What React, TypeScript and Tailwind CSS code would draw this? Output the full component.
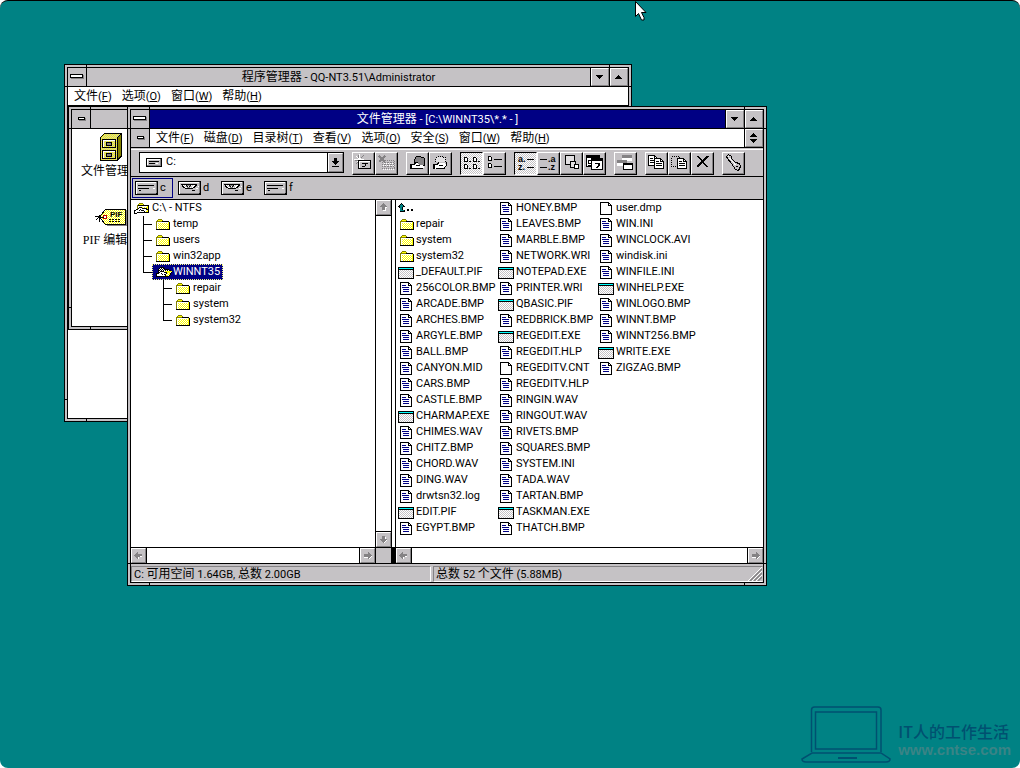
import React, { useState } from "react";

const PALETTE: Record<string, string> = {
  k: "#000000",
  w: "#ffffff",
  y: "#ffff00",
  o: "#848200",
  g: "#848284",
  l: "#c5c2c5",
  n: "#000084",
  c: "#00ffff",
  t: "#008284",
};

// Small bitmap icons, one letter per pixel
const Bitmap: React.FC<{ rows: string[]; className?: string }> = ({ rows, className }) => (
  <svg
    width={Math.max(...rows.map((row) => row.length))}
    height={rows.length}
    shapeRendering="crispEdges"
    className={`shrink-0 ${className ?? ""}`}
    aria-hidden="true"
  >
    {rows.map((row, y) =>
      row
        .split("")
        .map((p, x) =>
          PALETTE[p] ? <rect key={`${x}-${y}`} x={x} y={y} width={1} height={1} fill={PALETTE[p]} /> : null
        )
    )}
  </svg>
);

const FOLDER = [
  "..............",
  "..oooo........",
  ".oyyyyo.......",
  "ooooookkkkkkk.",
  "owwwwwwwwwwwyk",
  "owywywywywywyk",
  "owwywywywywyyk",
  "owywywywywywyk",
  "owwywywywywyyk",
  "owywywywywywyk",
  "owwywywywywyyk",
  "kkkkkkkkkkkkkk",
];

const LIST_FOLDER = FOLDER.map((row) => ".." + row);

const FOLDER_OPEN = [
  "................",
  ".....oooo.......",
  "....oyyyyo......",
  "...okkkkkkkkkkk.",
  "...owwwwwwwwwyk.",
  "...owkkkywywyyk.",
  "...okwwwkkkkkyk.",
  "..kkwwkwwwwwkkk.",
  "kkwwwkwkkkwwwyk.",
  "kwwwwwwwwwkwyyk.",
  "kwwkkkkkkkkkkkk.",
  "kkk.............",
];

const FOLDER_CURRENT = [
  "................",
  "....kkkk........",
  "...kwkwkk.......",
  "..kwkwkwkkkkk...",
  "..kkwkwkwkwkwkk.",
  "..kwkkkkwyyyyyyy",
  "..kkwwwwkkkyyywk",
  "kkkwwkwwwwkywyk.",
  "kwwwwwkwkkwwyyk.",
  "kwwwwwwwwkyywk..",
  "kkkkkkkkkkkkk...",
  "................",
];

const DOC = [
  "............",
  "kkkkkkkkk...",
  "kwwwwwwwkk..",
  "kwwwwwwwkwk.",
  "kwnnnnwwkkkk",
  "kwwwwwwwwwwk",
  "kwnnnnnnnwwk",
  "kwwwwwwwwwwk",
  "kwwnnnnnnwwk",
  "kwwwwwwwwwwk",
  "kwwnnnnnnwwk",
  "kwwwwwwwwwwk",
  "kwwwwwwwwwwk",
  "kkkkkkkkkkkk",
];

const BLANK = DOC.map((row) => row.replace(/n/g, "w"));

const PROGRAM = [
  "................",
  "................",
  "kkkkkkkkkkkkkkkk",
  "kcccccccccccccck",
  "kkkkkkkkkkkkkkkk",
  "kwlwlwlwlwlwlwlk",
  "klwlwlwlwlwlwlwk",
  "kwlwlwlwlwlwlwlk",
  "klwlwlwlwlwlwlwk",
  "kwlwlwlwlwlwlwlk",
  "klwlwlwlwlwlwlwk",
  "kwlwlwlwlwlwlwlk",
  "klwlwlwlwlwlwlwk",
  "kkkkkkkkkkkkkkkk",
];

const UP_DIR = [
  "...k............",
  "..ktk...........",
  ".ktttk..........",
  "kktttkk.........",
  ".kttk...........",
  "..ttk...........",
  "..ttk....kk..kk.",
  "..ttttk..kk..kk.",
  "..kkkkk.........",
  "................",
];

const HARD_DRIVE = [
  "kkkkkkkkkkkkkkkkkkkkkkk",
  "kwwwwwwwwwwwwwwwwwwwwgk",
  "kwlllllllllllllllllllgk",
  "kwlllllllllllllllllllgk",
  "kwlkkkkkkkkkkkkkkkkllgk",
  "kwlllllllllllllllllllgk",
  "kwlllllllllllllllllllgk",
  "kwlkkkkkkkkkkkllllwwlgk",
  "kwlllllllllllllllllllgk",
  "kwllkklllllllllllllllgk",
  "kwlllllllllllllllllllgk",
  "kwlllllllllllllllllllgk",
  "kwgggggggggggggggggggkk",
  "kkkkkkkkkkkkkkkkkkkkkkk",
];

const CD_DRIVE = [
  "kkkkkkkkkkkkkkkkkkkkkkk",
  "kwwwwwwwwwwwwwwwwwwwwgk",
  "kwlllllllllllllllllllgk",
  "kwlkkkkkkkkkkkkkkkkllgk",
  "kwllkwlwkgggkwlwwkkllgk",
  "kwllkkwlgkwkglwwkkllwgk",
  "kwlllkkwwgggwlwkkllllgk",
  "kwlllllkkkkkkkklllwwlgk",
  "kwlllllllllllllllllllgk",
  "kwllllllllllllkkkllllgk",
  "kwlllllllllllllllllllgk",
  "kwlllllllllllllllllllgk",
  "kwgggggggggggggggggggkk",
  "kkkkkkkkkkkkkkkkkkkkkkk",
];

const COMBO_DRIVE = [
  "kkkkkkkkkkkkkkkk",
  "kwwwwwwwwwwwwwgk",
  "kwllllllllllllgk",
  "kwlkkkkkkkkkklgk",
  "kwllllllllllllgk",
  "kwlkkkkkklwwllgk",
  "kwllllllllllllgk",
  "kggggggggggggggk",
  "kkkkkkkkkkkkkkkk",
];

const ARROW_DOWN = ["kkkkkkk.", ".kkkkk..", "..kkk...", "...k...."];
const ARROW_UP = ["...k....", "..kkk...", ".kkkkk..", "kkkkkkk."];
const RESTORE = [...ARROW_UP, "........", "........", ...ARROW_DOWN];
const COMBO_ARROW = ["..kkk..", "..kkk..", "..kkk..", "kkkkkkk", ".kkkkk.", "..kkk..", "...k...", ".......", "kkkkkkk"];
const SCROLL_LEFT = ["...g.....", "..gg.....", ".ggggggg.", "gggggggg.", ".gggggww.", "..ggw....", "...gw...."];
const SCROLL_RIGHT = [".....g...", ".....gg..", ".ggggggg.", ".gggggggg", ".gggggggw", ".wwwwggw.", ".....gw.."];
const SCROLL_UP = ["...g...", "..ggg..", ".ggggg.", "ggggggg", "..gggww", "..gggw.", "..gggw.", "...www.", "......."];
const SCROLL_DOWN = ["..ggg..", "..gggw.", "..gggw.", "ggggggg", ".gggggw", "..gggw.", "...gw.."];
const SYSTEM_BAR = ["kkkkkkkkkkkkk.", "kwwwwwwwwwwwkg", "kwwwwwwwwwwwkg", "kkkkkkkkkkkkkg", ".ggggggggggggg", ".............."];
const CHILD_BAR = ["..kkkkkkk.", "..kwwwwwkg", "..kkkkkkkg", "...ggggggg"];

const raised = "border border-t-white border-l-white border-r-[#848284] border-b-[#848284] bg-[#c5c2c5]";

// Latin runs are set one size smaller than the Chinese around them
const Mixed: React.FC<{ text: string }> = ({ text }) => (
  <>
    {text.split(/([\x20-\x7e]+)/).map((part, i) =>
      i % 2 ? (
        <span key={i} className="text-[11px] whitespace-pre">
          {part}
        </span>
      ) : (
        part
      )
    )}
  </>
);

type ToolIcon = { label: string; icon: React.ReactNode; pressed?: boolean };

const page = (x: number, y: number) => (
  <g>
    <path d={`M${x}.5 ${y}.5h6l3 3v7h-9z`} fill="#fff" stroke="#000" />
    <path d={`M${x + 6}.5 ${y}.5v3h3M${x + 2} ${y + 3}.5h3M${x + 2} ${y + 5}.5h6M${x + 2} ${y + 7}.5h6`} fill="none" stroke="#000" />
  </g>
);

const miniPage = (x: number, y: number) => (
  <path d={`M${x}.5 ${y}.5h2l1 1v3h-3z`} fill="#fff" stroke="#000" />
);

const sortText = "font-['Liberation_Sans'] text-[9px] font-bold";

const toolGroups: ToolIcon[][] = [
  [
    {
      label: "连接网络驱动器",
      icon: (
        <>
          <path d="M7.5 2v9M2 7.5h10M4 4l6 6M11 4l-6 6" stroke="#fff" />
          <path d="M6.5 3v3M3 8.5h3M9 6l3-3M4 12l2-2" stroke="#848284" />
          <rect x="6.5" y="8.5" width="12" height="8" fill="#c5c2c5" stroke="#000" />
          <path d="M7 9.5h11M7.5 10v6" stroke="#fff" />
          <path d="M10 11.5h6M13.5 12v2M10 14.5h3" stroke="#000" fill="none" />
        </>
      ),
    },
    {
      label: "断开网络驱动器",
      icon: (
        <>
          <rect x="7.5" y="8.5" width="12" height="8" fill="none" stroke="#848284" strokeDasharray="1 1" />
          <path d="M9 10.5h10M9 12.5h10M9 14.5h10" stroke="#848284" strokeDasharray="2 1" />
          <path d="M9 11.5h10M8 13.5h11M8 17.5h12" stroke="#fff" strokeDasharray="1 1" />
          <path d="M4 4l6 6M10 4l-6 6" stroke="#848284" strokeWidth="2" />
        </>
      ),
    },
  ],
  [
    {
      label: "共享目录",
      icon: (
        <>
          <path d="M8.5 12.5v-5l2-3h4l1 1h2l1 1v7h-5z" fill="#848284" stroke="#000" />
          <path d="M6 13h2l2-2h2l1 2h4l1 2-1 1h-7l-4 1z" fill="#fff" />
          <path d="M6 12.5h2l2-2h2M6 16.5h11M10 13.5h4" fill="none" stroke="#000" />
          <path d="M4 12h2v5h-2z" fill="#000" />
        </>
      ),
    },
    {
      label: "停止共享",
      icon: (
        <>
          <path d="M6.5 9.5v-3l2-2h5l1 1h2v5" fill="#e2e0e2" stroke="#000" strokeDasharray="1 1" />
          <path d="M6 13h2l2-2h6l1 2-2 3h-6l-3 1z" fill="#fff" />
          <path d="M6 12.5h2l2-2M17.5 10v3l-2 3h-9M10 13.5h4" fill="none" stroke="#000" />
          <path d="M4 12h2v5h-2z" fill="#000" />
        </>
      ),
    },
  ],
  [
    {
      label: "名称",
      pressed: true,
      icon: (
        <>
          {miniPage(4, 5)}
          {miniPage(13, 5)}
          {miniPage(4, 12)}
          {miniPage(13, 12)}
          <path d="M9 9.5h2M18 9.5h2M9 16.5h2M18 16.5h2" stroke="#000" />
        </>
      ),
    },
    {
      label: "所有文件细节",
      icon: (
        <>
          {miniPage(5, 4)}
          {miniPage(5, 11)}
          <path d="M11 7.5h8M11 14.5h8" stroke="#000" />
        </>
      ),
    },
  ],
  [
    {
      label: "按名称排序",
      pressed: true,
      icon: (
        <>
          <text x="4" y="10" className={sortText}>a.</text>
          <text x="4" y="18" className={sortText}>z.</text>
          <path d="M13 7.5h7M13 15.5h7" stroke="#000" />
        </>
      ),
    },
    {
      label: "按类型排序",
      icon: (
        <>
          <text x="11" y="10" className={sortText}>.a</text>
          <text x="11" y="18" className={sortText}>.z</text>
          <path d="M3 7.5h7M3 15.5h7" stroke="#000" />
        </>
      ),
    },
    {
      label: "按大小排序",
      icon: (
        <>
          <rect x="5.5" y="3.5" width="9" height="9" fill="#e2e0e2" stroke="#000" />
          <rect x="10.5" y="9.5" width="5" height="6" fill="#e2e0e2" stroke="#000" />
          <rect x="14.5" y="12.5" width="4" height="4" fill="#fff" stroke="#000" />
        </>
      ),
    },
    {
      label: "按日期排序",
      icon: (
        <>
          <rect x="3.5" y="3.5" width="13" height="11" fill="#fff" stroke="#000" />
          <path d="M3 4.5h14M3 5.5h14M5 8.5h3M5.5 9v2M5 11.5h3M5 13.5h3" stroke="#000" />
          <rect x="8.5" y="6.5" width="11" height="11" fill="#fff" stroke="#000" />
          <path d="M8 7.5h12M8 8.5h12" stroke="#000" />
          <path d="M12 11h5v2l-2 3h-2l2-3v-1h-3z" fill="#000" />
        </>
      ),
    },
  ],
  [
    {
      label: "新窗口",
      icon: (
        <>
          <path d="M8 3h10v6h-10zM3 8h10v6h-10z" fill="#fff" />
          <path d="M8 3h10v3h-10zM3 8h10v3h-10z" fill="#848284" />
          <rect x="9.5" y="11.5" width="9" height="6" fill="#fff" stroke="#000" />
          <path d="M9 12h10" stroke="#000" strokeWidth="2" />
        </>
      ),
    },
  ],
  [
    {
      label: "复制",
      icon: (
        <>
          {page(3, 3)}
          {page(9, 6)}
        </>
      ),
    },
    {
      label: "移动",
      icon: (
        <>
          <rect x="3.5" y="4.5" width="8" height="10" fill="none" stroke="#000" strokeDasharray="1 1" />
          {page(9, 6)}
        </>
      ),
    },
    {
      label: "删除",
      icon: (
        <>
          <path d="M5 4h3l3 4 5-4h2l-6 6 5 5h-2l-4-4-4 4-2-1 5-5z" fill="#000" />
        </>
      ),
    },
  ],
  [
    {
      label: "权限",
      icon: (
        <>
          <path d="M4.5 4.5l2-2 3 2v2l4 4 4 1 1 3-2 4-3-1-2-3-2-3-4-5z" fill="#c5c2c5" stroke="#000" />
          <path d="M6 4.5h1M7.5 6l6 7" stroke="#fff" />
          <path d="M14 14.5h2" stroke="#000" />
        </>
      ),
    },
  ],
];

const files = `..
repair/
system/
system32/
_DEFAULT.PIF
256COLOR.BMP
ARCADE.BMP
ARCHES.BMP
ARGYLE.BMP
BALL.BMP
CANYON.MID
CARS.BMP
CASTLE.BMP
CHARMAP.EXE
CHIMES.WAV
CHITZ.BMP
CHORD.WAV
DING.WAV
drwtsn32.log
EDIT.PIF
EGYPT.BMP
HONEY.BMP
LEAVES.BMP
MARBLE.BMP
NETWORK.WRI
NOTEPAD.EXE
PRINTER.WRI
QBASIC.PIF
REDBRICK.BMP
REGEDIT.EXE
REGEDIT.HLP
REGEDITV.CNT
REGEDITV.HLP
RINGIN.WAV
RINGOUT.WAV
RIVETS.BMP
SQUARES.BMP
SYSTEM.INI
TADA.WAV
TARTAN.BMP
TASKMAN.EXE
THATCH.BMP
user.dmp
WIN.INI
WINCLOCK.AVI
windisk.ini
WINFILE.INI
WINHELP.EXE
WINLOGO.BMP
WINNT.BMP
WINNT256.BMP
WRITE.EXE
ZIGZAG.BMP`.split("\n");

const fileIcon = (name: string) => {
  if (name === "..") return UP_DIR;
  if (name.endsWith("/")) return LIST_FOLDER;
  if (/\.(EXE|PIF)$/.test(name)) return PROGRAM;
  if (/\.(CNT|dmp)$/.test(name)) return BLANK;
  return DOC;
};

const WindowFrame: React.FC<{ className?: string; children: React.ReactNode }> = ({ className, children }) => (
  <section className={`border border-black bg-[#c5c2c5] p-[2px] ${className ?? ""}`}>
    {/* corner grips of the sizing border */}
    <span className="absolute top-0 left-[21px] h-[2px] w-px bg-black" />
    <span className="absolute top-0 right-[21px] h-[2px] w-px bg-black" />
    <span className="absolute bottom-0 left-[21px] h-[2px] w-px bg-black" />
    <span className="absolute right-[21px] bottom-0 h-[2px] w-px bg-black" />
    <span className="absolute top-[21px] left-0 h-px w-[2px] bg-black" />
    <span className="absolute top-[21px] right-0 h-px w-[2px] bg-black" />
    <span className="absolute bottom-[21px] left-0 h-px w-[2px] bg-black" />
    <span className="absolute right-0 bottom-[21px] h-px w-[2px] bg-black" />
    <div className="flex h-full flex-col border border-black">{children}</div>
  </section>
);

const CaptionButton: React.FC<{ label: string; rows: string[] }> = ({ label, rows }) => (
  <div className="border-l border-black">
    <button aria-label={label} className={`flex h-[18px] w-[18px] items-center justify-center ${raised}`}>
      <Bitmap rows={rows} />
    </button>
  </div>
);

const SystemButton: React.FC<{ rows: string[] }> = ({ rows }) => (
  <button
    aria-label="控制菜单"
    className="flex w-[19px] shrink-0 items-center justify-center border-r border-black bg-[#c5c2c5]"
  >
    <Bitmap rows={rows} />
  </button>
);

const TitleBar: React.FC<{ title: string; active?: boolean; child?: boolean }> = ({ title, active, child }) => (
  <header
    className={`flex h-[19px] shrink-0 border-b border-black ${active ? "bg-[#000084] text-white" : "bg-[#c5c2c5]"}`}
  >
    <SystemButton rows={child ? CHILD_BAR : SYSTEM_BAR} />
    <h2 className="flex-1 text-center leading-[18px]">
      <Mixed text={title} />
    </h2>
    <CaptionButton label="最小化" rows={ARROW_DOWN} />
    <CaptionButton label="最大化" rows={ARROW_UP} />
  </header>
);

const Menu: React.FC<{ items: string[] }> = ({ items }) => (
  <nav className="flex flex-1 items-start gap-[10px] pl-[6px] leading-[18px]">
    {items.map((item) => (
      <button key={item}>
        {item.slice(0, -1)}
        <span className="text-[11px]">
          (<span className="underline underline-offset-1">{item.slice(-1)}</span>)
        </span>
      </button>
    ))}
  </nav>
);

const ScrollButton: React.FC<{ label: string; rows: string[] }> = ({ label, rows }) => (
  <button aria-label={label} className={`flex h-[15px] w-[15px] shrink-0 items-center justify-center ${raised}`}>
    <Bitmap rows={rows} />
  </button>
);

const HorizontalScroll: React.FC = () => (
  <div className="flex h-4 flex-1 border-t border-black bg-white">
    <div className="border-r border-black">
      <ScrollButton label="向左" rows={SCROLL_LEFT} />
    </div>
    <div className="flex-1" />
    <div className="border-l border-black">
      <ScrollButton label="向右" rows={SCROLL_RIGHT} />
    </div>
  </div>
);

type Node = { name: string; children?: Node[] };

const tree: Node[] = [
  { name: "temp" },
  { name: "users" },
  { name: "win32app" },
  { name: "WINNT35", children: [{ name: "repair" }, { name: "system" }, { name: "system32" }] },
];

const Tree: React.FC<{
  nodes: Node[];
  className: string;
  selected: string;
  onSelect: (name: string) => void;
}> = ({ nodes, className, selected, onSelect }) => (
  <ul className={className}>
    {nodes.map((node, i) => (
      <li key={node.name}>
        <div className="flex h-4">
          <span className="flex w-[9px] flex-col">
            <span className="h-[9px] border-b border-l border-black" />
            {i < nodes.length - 1 && <span className="flex-1 border-l border-black" />}
          </span>
          <button
            onClick={() => onSelect(node.name)}
            className={`flex h-4 items-center gap-px pr-[3px] pl-1 leading-4 ${
              selected === node.name
                ? "bg-[#000084] text-white outline-1 -outline-offset-1 outline-[#ffff7b] outline-dotted"
                : ""
            }`}
          >
            <span className="w-4">
              <Bitmap rows={node.name === "WINNT35" ? FOLDER_CURRENT : FOLDER} />
            </span>
            {node.name}
          </button>
        </div>
        {node.children && <Tree nodes={node.children} className="ml-5" selected={selected} onSelect={onSelect} />}
      </li>
    ))}
  </ul>
);

const CabinetIcon = () => (
  <svg width="32" height="32" shapeRendering="crispEdges" aria-hidden="true">
    <defs>
      <pattern id="yellow" width="2" height="2" patternUnits="userSpaceOnUse">
        <rect width="2" height="2" fill="#ffff00" />
        <path d="M0 0h1v1h-1zM1 1h1v1h-1z" fill="#c5c2c5" />
      </pattern>
    </defs>
    <path d="M5.5 5.5l4-4h17v23l-4 4h-17z" fill="url(#yellow)" stroke="#000" />
    <path d="M22 6l4-4v22l-4 4z" fill="#848200" stroke="#000" />
    <rect x="7.5" y="7.5" width="13" height="8" fill="url(#yellow)" stroke="#000" />
    <rect x="7.5" y="18.5" width="13" height="8" fill="url(#yellow)" stroke="#000" />
    <path d="M8 8.5h12M8 19.5h12M8.5 9v6M8.5 20v6" stroke="#fff" />
    <rect x="11.5" y="10.5" width="5" height="3" fill="#848284" stroke="#000" />
    <rect x="11.5" y="21.5" width="5" height="3" fill="#848284" stroke="#000" />
  </svg>
);

const PifIcon = () => (
  <svg width="32" height="32" shapeRendering="crispEdges" aria-hidden="true">
    <defs>
      <pattern id="tag" width="2" height="2" patternUnits="userSpaceOnUse">
        <rect width="2" height="2" fill="#ffff00" />
        <path d="M1 0h1v1h-1zM0 1h1v1h-1z" fill="#fff" />
      </pattern>
    </defs>
    <path d="M6 15l5-6h21v16h-20l-6-7z" fill="#848284" />
    <path d="M5.5 14.5l5-6h20v15h-20l-5-6z" fill="url(#tag)" stroke="#000" />
    <rect x="8.5" y="14.5" width="3" height="3" fill="#fff" stroke="#c00000" />
    <path d="M9 16.5h-5l-3 2M0 15.5h4M4 14v7" fill="none" stroke="#000" />
    <text x="15" y="16" className="font-['Liberation_Sans'] text-[8px] font-bold">PIF</text>
    <path d="M14 18.5h12M14 20.5h12" stroke="#000" strokeDasharray="2 1" />
  </svg>
);

const ProgramManager: React.FC = () => (
  <WindowFrame className="absolute top-[64px] left-[64px] h-[358px] w-[568px]">
    <TitleBar title="程序管理器 - QQ-NT3.51\Administrator" />
    <div className="flex h-[19px] border-b border-black bg-white">
      <Menu items={["文件F", "选项O", "窗口W", "帮助H"]} />
    </div>
    <div className="flex-1 bg-white">
      <WindowFrame className="relative h-[224px] w-[480px]">
        <TitleBar title="主群组" child />
        <div className="grid flex-1 auto-rows-[69px] grid-cols-[78px] bg-white pt-[3px] text-center">
          <button className="flex flex-col items-center">
            <CabinetIcon />
            <span className="leading-[14px] whitespace-nowrap">文件管理器</span>
          </button>
          <button className="flex flex-col items-center">
            <PifIcon />
            <span className="font-['Liberation_Serif','Noto_Sans_CJK_SC',serif] leading-[14px] whitespace-nowrap">
              PIF 编辑器
            </span>
          </button>
        </div>
      </WindowFrame>
    </div>
  </WindowFrame>
);

const Toolbar: React.FC = () => (
  <div className="mt-px flex h-7 items-start gap-2 border-t border-b border-t-white border-b-black pt-[2px] pl-2">
    <div className="flex h-[21px] w-[205px] items-center border border-black bg-white pl-[6px]">
      <Bitmap rows={COMBO_DRIVE} />
      <select
        aria-label="驱动器"
        className="flex-1 appearance-none self-stretch bg-white pl-1 text-[11px] outline-none"
      >
        <option>C:</option>
        <option>D:</option>
        <option>E:</option>
        <option>F:</option>
      </select>
      <span className="border-l border-black">
        <span className={`flex h-[19px] w-[15px] items-center justify-center ${raised}`}>
          <Bitmap rows={COMBO_ARROW} />
        </span>
      </span>
    </div>
    {toolGroups.map((group, i) => (
      <div key={i} className="flex">
        {group.map(({ label, icon, pressed }) => (
          <button
            key={label}
            aria-label={label}
            aria-pressed={pressed}
            className={`border ${
              pressed
                ? "border-t-black border-r-white border-b-white border-l-black bg-[conic-gradient(#fff_25%,#c5c2c5_0_50%,#fff_0_75%,#c5c2c5_0)] bg-[length:2px_2px]"
                : "border-t-white border-r-black border-b-black border-l-white bg-[#c5c2c5] shadow-[inset_-1px_-1px_#848284]"
            }`}
          >
            <svg width="21" height="21" viewBox="1 1 21 21" shapeRendering="crispEdges" aria-hidden="true">
              {icon}
            </svg>
          </button>
        ))}
      </div>
    ))}
  </div>
);

const DriveBar: React.FC = () => {
  const [drive, setDrive] = useState("c");
  return (
    <div className="flex h-[23px] items-center gap-[2px] border-b border-black pl-px text-[11px]">
      {["c", "d", "e", "f"].map((letter) => (
        <button
          key={letter}
          onClick={() => setDrive(letter)}
          className={`flex h-5 w-[41px] items-center gap-[2px] border pl-[2px] ${
            drive === letter ? "border-[#000084]" : "border-transparent"
          }`}
        >
          <Bitmap rows={letter === "d" || letter === "e" ? CD_DRIVE : HARD_DRIVE} />
          {letter}
        </button>
      ))}
    </div>
  );
};

const FileManager: React.FC = () => {
  const [selected, setSelected] = useState("WINNT35");

  return (
    <WindowFrame className="absolute top-[106px] left-[127px] h-[480px] w-[640px]">
      <TitleBar title="文件管理器 - [C:\WINNT35\*.* - ]" active />
      <div className="flex h-[19px] border-b border-black bg-white">
        <SystemButton rows={CHILD_BAR} />
        <Menu items={["文件F", "磁盘D", "目录树T", "查看V", "选项O", "安全S", "窗口W", "帮助H"]} />
        <CaptionButton label="还原" rows={RESTORE} />
      </div>
      <Toolbar />
      <DriveBar />

      <main className="flex min-h-0 flex-1 border-b border-black bg-white text-[11px]">
        <div className="flex w-[261px] flex-col border-r border-black">
          <div className="flex min-h-0 flex-1">
            <div className="flex-1">
              <button className="flex h-4 items-center gap-[2px] pl-[3px] leading-4">
                <Bitmap rows={FOLDER_OPEN} />
                C:\ - NTFS
              </button>
              <Tree nodes={tree} className="ml-3" selected={selected} onSelect={setSelected} />
            </div>
            <div className="flex flex-col justify-between border-l border-black">
              <div className="border-b border-black">
                <ScrollButton label="向上" rows={SCROLL_UP} />
              </div>
              <div className="border-t border-black">
                <ScrollButton label="向下" rows={SCROLL_DOWN} />
              </div>
            </div>
          </div>
          <div className="flex">
            <HorizontalScroll />
            <div className="w-4 border-t border-l border-black bg-[#c5c2c5]" />
          </div>
        </div>
        {/* splitter */}
        <div className="flex w-1 flex-col border-r border-black">
          <div className="flex-1" />
          <div className="h-4 bg-black" />
        </div>
        <div className="flex min-w-0 flex-1 flex-col">
          <ul className="grid flex-1 auto-cols-[100px] grid-flow-col grid-rows-[repeat(21,16px)]">
            {files.map((name) => (
              <li key={name} className="flex h-4 items-center leading-4 whitespace-nowrap">
                <span className="flex w-5 shrink-0 justify-center">
                  <Bitmap rows={fileIcon(name)} />
                </span>
                {name === ".." ? "" : name.replace("/", "")}
              </li>
            ))}
          </ul>
          <div className="flex">
            <HorizontalScroll />
          </div>
        </div>
      </main>

      <footer className="flex h-[18px] gap-[2px] pt-[2px] leading-[14px]">
        <p className="w-[300px] border border-t-[#848284] border-r-white border-b-white border-l-[#848284] pl-[2px]">
          <Mixed text="C: 可用空间 1.64GB, 总数 2.00GB" />
        </p>
        <p className="flex flex-1 justify-between border border-t-[#848284] border-r-transparent border-b-white border-l-[#848284] pl-[2px]">
          <span>
            <Mixed text="总数 52 个文件 (5.88MB)" />
          </span>
          <svg width="14" height="14" aria-hidden="true">
            <path d="M0 14L14 0M4 14L14 4M8 14L14 8" stroke="#fff" />
            <path d="M2 14L14 2M6 14L14 6M10 14L14 10" stroke="#848284" strokeWidth="1.5" />
          </svg>
        </p>
      </footer>
    </WindowFrame>
  );
};

const Watermark: React.FC = () => (
  <a href="#" className="absolute right-[9px] bottom-[5px] flex items-center gap-[7px]">
    <svg width="90" height="58" viewBox="0 0 90 58" fill="none" stroke="#005070" strokeWidth="1.5" aria-hidden="true">
      <path d="M10.5 47V5q0-3 3-3H77q3 0 3 3V47" />
      <rect x="14.5" y="7" width="61" height="37" />
      <path d="M11 48H80L89 54q0 3-4 3H5q-4 0-4-3z" />
      <path d="M37 53H56" strokeWidth="2" />
    </svg>
    <span className="flex flex-col pt-3">
      <span className="font-['Noto_Sans_CJK_SC',sans-serif] text-[16px] leading-5 font-medium text-[#005070]">
        IT人的工作生活
      </span>
      <span className="font-['Liberation_Sans',sans-serif] text-[15px] leading-[18px] font-bold text-[#3a8486]">
        www.cntse.com
      </span>
    </span>
  </a>
);

const App: React.FC = () => (
  <div className="relative min-h-screen overflow-hidden rounded-lg border-t border-black bg-[#008284] font-['Roboto','Noto_Sans_CJK_SC',sans-serif] text-[12px] text-black">
    <div className="absolute -top-px left-0">
      <ProgramManager />
      <FileManager />
    </div>
    <Watermark />
    <svg className="absolute top-0 left-[635px]" width="12" height="20" aria-hidden="true">
      <path d="M.5 .5v15l3-3 3 6.5h2.5v-2.5l-2.5-5h4.5z" fill="#fff" stroke="#000" />
    </svg>
  </div>
);

export default App;
